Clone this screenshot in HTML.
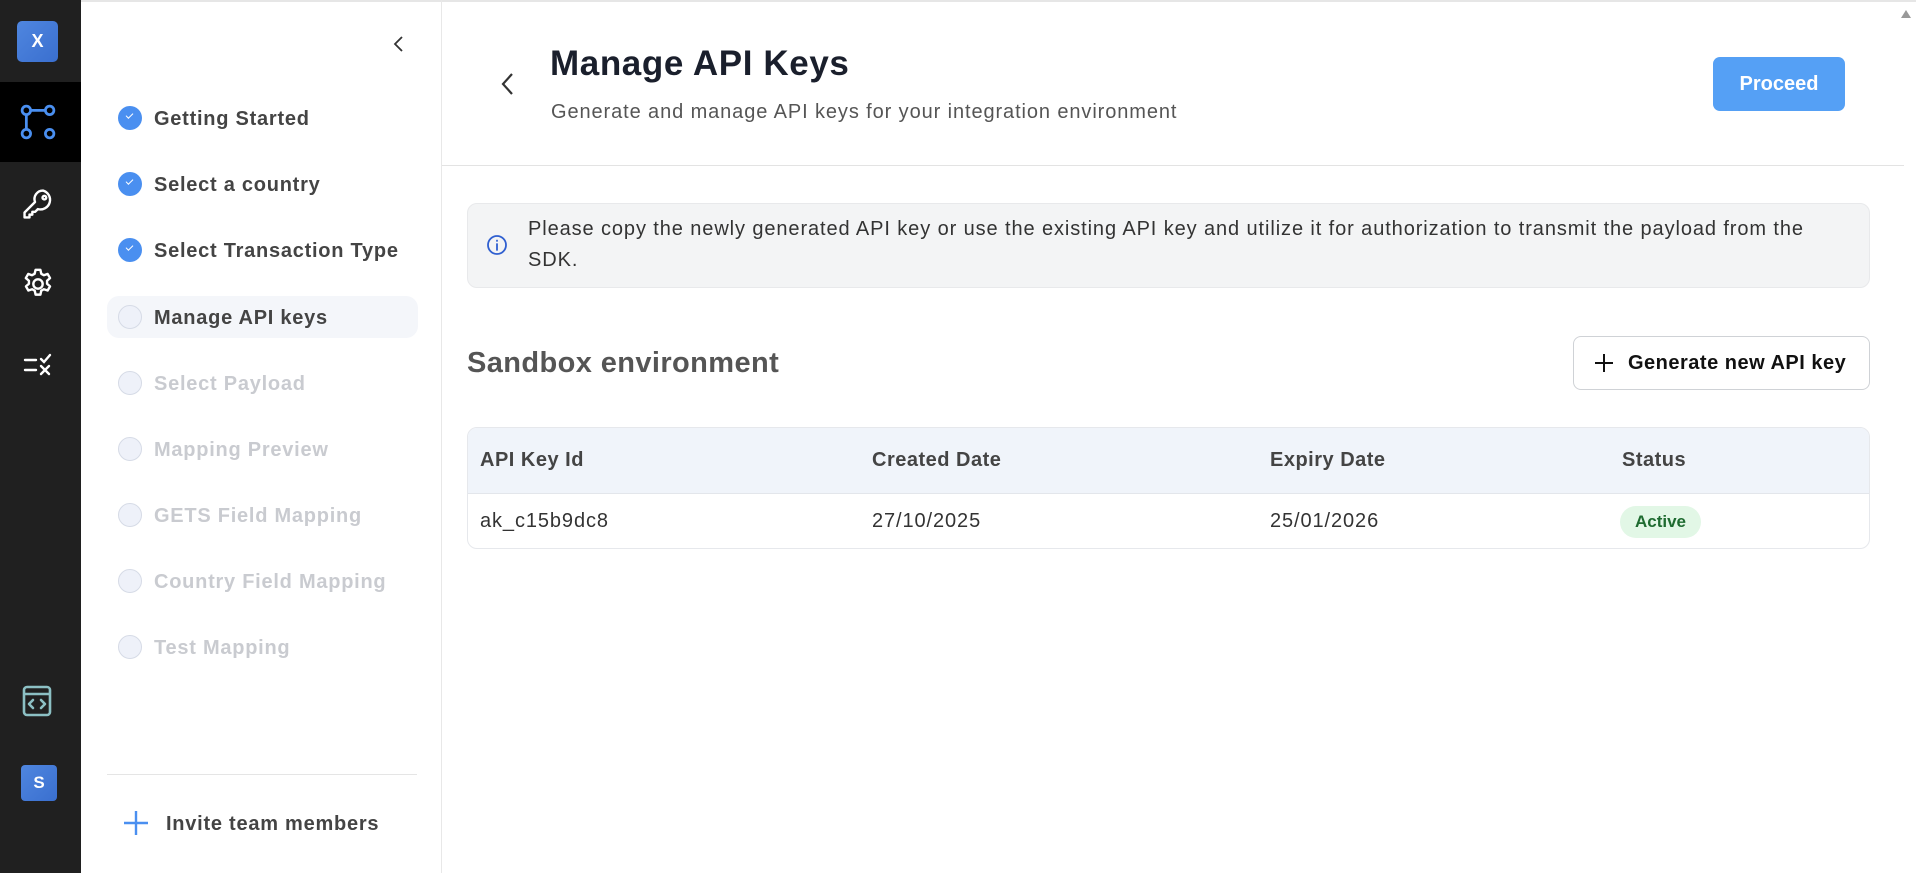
<!DOCTYPE html>
<html><head><meta charset="utf-8">
<style>
*{box-sizing:border-box;margin:0;padding:0}
body{width:1916px;height:873px;overflow:hidden;background:#fff;font-family:"Liberation Sans",sans-serif;position:relative}
.abs{position:absolute}
.dark{left:0;top:0;width:81px;height:873px;background:#202020}
.step{position:absolute;left:107px;width:310px;height:42px}
.step .c{position:absolute;left:11px;top:9px;width:24px;height:24px;border-radius:50%}
.step .t{position:absolute;left:47px;top:11px;font-size:20px;font-weight:bold;white-space:nowrap;letter-spacing:0.75px}
.done .c{background:#4a8ff0}
.todo .c{background:#eef1f9;border:1px solid #d6dbe6}
.done .t,.cur .t{color:#444}
.todo .t{color:#c9cbd0}
.done .c::after{content:"";position:absolute;left:8px;top:7px;width:6px;height:3px;border-left:1.5px solid #fff;border-bottom:1.5px solid #fff;transform:rotate(-45deg)}
.r{letter-spacing:0.9px}
</style></head><body>
<div class="abs dark"></div>
<div class="abs" style="left:81px;top:0;width:1835px;height:2px;background:#e6e6e6"></div>
<div class="abs" style="left:17px;top:21px;width:41px;height:41px;border-radius:5px;background:linear-gradient(135deg,#4f86df,#3a6fcf);color:#fff;font-weight:bold;font-size:18px;text-align:center;line-height:41px">X</div>
<div class="abs" style="left:0;top:82px;width:81px;height:80px;background:#000"></div>
<svg class="abs" style="left:20px;top:104px" width="36" height="36" viewBox="0 0 34 34" fill="none" stroke="#4a8ff0" stroke-width="2.6">
<circle cx="6" cy="6" r="4"/><circle cx="28" cy="6" r="4"/><circle cx="6" cy="28" r="4"/><circle cx="28" cy="28" r="4"/>
<path d="M10 6H24M6 10V24"/></svg>
<svg class="abs" style="left:21px;top:187px" width="34" height="34" viewBox="0 0 24 24" fill="none" stroke="#fff" stroke-width="1.7" stroke-linecap="round" stroke-linejoin="round">
<path d="M15.5 2.5a6 6 0 0 0-5.6 8.1L2.5 18v3.5H6v-2h2v-2h2l1.9-1.9A6 6 0 1 0 15.5 2.5z"/><circle cx="16.5" cy="7.5" r="1.3"/></svg>
<svg class="abs" style="left:21px;top:267px" width="34" height="34" viewBox="0 0 24 24" fill="none" stroke="#fff" stroke-width="1.7" stroke-linejoin="round">
<path d="M10.3 2h3.4l.6 2.8 1.8 1 2.7-.9 1.7 2.9-2.1 1.9v2.1l2.1 1.9-1.7 2.9-2.7-.9-1.8 1-.6 2.8h-3.4l-.6-2.8-1.8-1-2.7.9-1.7-2.9 2.1-1.9v-2.1L3.4 7.8l1.7-2.9 2.7.9 1.8-1z"/><circle cx="12" cy="12" r="3.3"/></svg>
<svg class="abs" style="left:23px;top:352px" width="30" height="26" viewBox="0 0 30 26" fill="none" stroke="#fff" stroke-width="2.4" stroke-linecap="round">
<path d="M2 8H13M2 18H13M18 7l3 3 6-7M18 14l8 8M26 14l-8 8"/></svg>
<svg class="abs" style="left:22px;top:685px" width="30" height="32" viewBox="0 0 30 32" fill="none" stroke="#8cc0c4" stroke-width="2.6" stroke-linejoin="round">
<rect x="2" y="2" width="26" height="28" rx="3"/><path d="M2 9H28"/><path d="M11 15l-4 4 4 4M19 15l4 4-4 4" stroke-linecap="round"/></svg>
<div class="abs" style="left:21px;top:765px;width:36px;height:36px;border-radius:4px;background:linear-gradient(135deg,#4f86df,#3a6fcf);color:#fff;font-weight:bold;font-size:17px;text-align:center;line-height:36px">S</div>

<div class="abs" style="left:441px;top:0;width:1px;height:873px;background:#e8e8e8"></div>
<svg class="abs" style="left:392px;top:35px" width="14" height="18" viewBox="0 0 14 18" fill="none" stroke="#333" stroke-width="1.8"><path d="M10 2L3 9l7 7"/></svg>
<div class="abs" style="left:107px;top:296px;width:311px;height:42px;border-radius:12px;background:#f4f6fa"></div>
<div class="step done" style="top:97px"><div class="c"></div><div class="t">Getting Started</div></div>
<div class="step done" style="top:163px"><div class="c"></div><div class="t">Select a country</div></div>
<div class="step done" style="top:229px"><div class="c"></div><div class="t">Select Transaction Type</div></div>
<div class="step todo cur" style="top:296px"><div class="c"></div><div class="t" style="color:#444">Manage API keys</div></div>
<div class="step todo" style="top:362px"><div class="c"></div><div class="t">Select Payload</div></div>
<div class="step todo" style="top:428px"><div class="c"></div><div class="t">Mapping Preview</div></div>
<div class="step todo" style="top:494px"><div class="c"></div><div class="t">GETS Field Mapping</div></div>
<div class="step todo" style="top:560px"><div class="c"></div><div class="t">Country Field Mapping</div></div>
<div class="step todo" style="top:626px"><div class="c"></div><div class="t">Test Mapping</div></div>
<div class="abs" style="left:107px;top:774px;width:310px;height:1px;background:#e5e5e5"></div>
<svg class="abs" style="left:123px;top:810px" width="26" height="26" viewBox="0 0 26 26" stroke="#4a8ff0" stroke-width="2.4"><path d="M13 1V25M1 13H25"/></svg>
<div class="abs" style="left:166px;top:813px;font-size:20px;font-weight:bold;color:#444;letter-spacing:0.75px">Invite team members</div>

<svg class="abs" style="left:500px;top:72px" width="16" height="24" viewBox="0 0 16 24" fill="none" stroke="#333" stroke-width="2.2"><path d="M12 2L3 12l9 10"/></svg>
<div class="abs" style="left:550px;top:44px;font-size:35px;font-weight:bold;color:#1a1f2c;letter-spacing:0.6px">Manage API Keys</div>
<div class="abs r" style="left:551px;top:101px;font-size:20px;color:#555">Generate and manage API keys for your integration environment</div>
<div class="abs" style="left:1713px;top:57px;width:132px;height:54px;border-radius:7px;background:#55a0f5;color:#fff;font-size:20px;font-weight:bold;text-align:center;line-height:54px">Proceed</div>
<div class="abs" style="left:442px;top:165px;width:1462px;height:1px;background:#e3e3e3"></div>

<div class="abs" style="left:467px;top:203px;width:1403px;height:85px;border-radius:10px;background:#f3f4f5;border:1px solid #e8e9eb"></div>
<svg class="abs" style="left:486px;top:234px" width="22" height="22" viewBox="0 0 22 22" fill="none" stroke="#2f5fd0" stroke-width="1.8"><circle cx="11" cy="11" r="9"/><path d="M11 10v6M11 6.5v.5" stroke-linecap="round"/></svg>
<div class="abs r" style="left:528px;top:214px;width:1310px;font-size:20px;line-height:31px;color:#333">Please copy the newly generated API key or use the existing API key and utilize it for authorization to transmit the payload from the SDK.</div>

<div class="abs" style="left:467px;top:347px;font-size:29px;font-weight:bold;color:#555;letter-spacing:0.4px">Sandbox environment</div>
<div class="abs" style="left:1573px;top:336px;width:297px;height:54px;border-radius:8px;border:1px solid #cfd2d6;background:#fff"></div>
<svg class="abs" style="left:1594px;top:353px" width="20" height="20" viewBox="0 0 20 20" stroke="#111" stroke-width="2"><path d="M10 1V19M1 10H19"/></svg>
<div class="abs" style="left:1628px;top:352px;font-size:20px;font-weight:bold;color:#111;letter-spacing:0.5px">Generate new API key</div>

<div class="abs" style="left:467px;top:427px;width:1403px;height:122px;border-radius:10px;border:1px solid #e6e8ec;overflow:hidden">
 <div style="height:66px;background:#f0f4fa;border-bottom:1px solid #e3e6eb"></div>
</div>
<div class="abs" style="left:480px;top:449px;font-size:20px;font-weight:bold;color:#444;letter-spacing:0.5px">API Key Id</div>
<div class="abs" style="left:872px;top:449px;font-size:20px;font-weight:bold;color:#444;letter-spacing:0.5px">Created Date</div>
<div class="abs" style="left:1270px;top:449px;font-size:20px;font-weight:bold;color:#444;letter-spacing:0.5px">Expiry Date</div>
<div class="abs" style="left:1622px;top:449px;font-size:20px;font-weight:bold;color:#444;letter-spacing:0.5px">Status</div>
<div class="abs r" style="left:480px;top:510px;font-size:20px;color:#333">ak_c15b9dc8</div>
<div class="abs r" style="left:872px;top:510px;font-size:20px;color:#333">27/10/2025</div>
<div class="abs r" style="left:1270px;top:510px;font-size:20px;color:#333">25/01/2026</div>
<div class="abs" style="left:1620px;top:506px;width:81px;height:32px;border-radius:16px;background:#e2f7e6;color:#1e6b30;font-size:17px;font-weight:bold;text-align:center;line-height:32px">Active</div>

<svg class="abs" style="left:1900px;top:9px" width="12" height="10" viewBox="0 0 12 10"><path d="M6 1L11 9H1z" fill="#999"/></svg>
</body></html>
